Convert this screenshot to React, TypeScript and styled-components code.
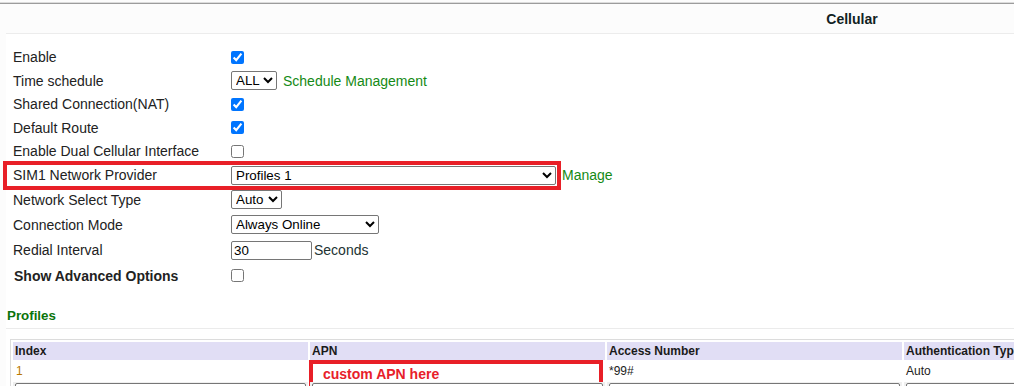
import React from 'react';
import styled, { createGlobalStyle } from 'styled-components';

const GlobalStyle = createGlobalStyle`
  html, body {
    margin: 0;
    padding: 0;
    background: #fcfcfc;
    overflow: hidden;
  }

  body {
    font-family: "Liberation Sans", Arial, sans-serif;
    font-size: 14px;
    color: #222;
  }
`;

const Page = styled.div`
  width: 1704px;
  padding-top: 3px;
`;

const TitleBar = styled.header`
  height: 29px;
  border-top: 1px solid #9c9c9c;
  box-shadow: 0 -1px 0 #dcdcdc;
  background: #fcfcfc;
  display: flex;
  align-items: center;
  justify-content: center;

  h1 {
    margin: 0;
    font-size: 14px;
    font-weight: bold;
    color: #112222;
  }
`;

const Panel = styled.main`
  margin-left: 6px;
  background: #fff;
  border-top: 1px solid #ececec;
  padding-bottom: 40px;
`;

const Form = styled.div`
  padding: 11.5px 0 0 7px;
`;

const Row = styled.div<{ $h: number }>`
  display: flex;
  align-items: center;
  height: ${p => p.$h}px;
`;

const Label = styled.div<{ $bold?: boolean }>`
  width: 218px;
  flex: none;
  font-weight: ${p => (p.$bold ? 'bold' : 'normal')};
  padding-left: ${p => (p.$bold ? '1px' : '0')};
  box-sizing: border-box;
  white-space: nowrap;
`;

const Value = styled.div`
  display: flex;
  align-items: center;
`;

const Highlight = styled.div`
  display: flex;
  align-items: center;
  height: 21px;
  margin-left: -6px;
  padding: 0 1px 0 6px;
  outline: 4px solid #e81f27;
  outline-offset: 0;
`;

const Check = styled.input.attrs({ type: 'checkbox' })`
  margin: 0;
  width: 13px;
  height: 13px;
`;

const Select = styled.select<{ $w: number }>`
  width: ${p => p.$w}px;
  height: 19px;
  margin: 0;
  font-family: "Liberation Sans", Arial, sans-serif;
  font-size: 13.333px;
  color: #000;
  background: #fff;
  border: 1px solid #767676;
  border-radius: 2px;
`;

const TextBox = styled.input<{ $w?: number }>`
  box-sizing: border-box;
  width: ${p => (p.$w ? `${p.$w}px` : 'calc(100% - 4px)')};
  height: 19px;
  margin: 0;
  padding: 1px 2px;
  font-family: "Liberation Sans", Arial, sans-serif;
  font-size: 13.333px;
  color: #000;
  border: 1px solid #767676;
  border-radius: 2px;
`;

const Link = styled.a<{ $gap: number }>`
  margin-left: ${p => p.$gap}px;
  color: #158a15;
  text-decoration: none;
  white-space: nowrap;
`;

const Unit = styled.span`
  margin-left: 2px;
  color: #223333;
`;

const SectionTitle = styled.h2`
  margin: 20px 0 0;
  padding: 0 0 4px 1px;
  border-bottom: 1px solid #ebebeb;
  font-size: 13.333px;
  line-height: 16px;
  font-weight: bold;
  color: #0a740a;
`;

const Table = styled.table`
  margin: 10px 0 0 4px;
  width: 1786px;
  table-layout: fixed;
  border: 1px solid #dcdcdc;
  border-spacing: 2px;
  font-size: 12px;

  th {
    height: 18px;
    padding: 0 2px;
    background: #e1def5;
    text-align: left;
    font-weight: bold;
    color: #1a1a1a;
    white-space: nowrap;
    overflow: hidden;
  }

  td {
    height: 18px;
    padding: 0 2px;
    color: #222;
    position: relative;
  }
`;

const EditRow = styled.tr`
  td {
    background: #efefef;
    padding: 1px 0;
  }

  input, select {
    margin-left: 2px;
  }
`;

const IndexCell = styled.td`
  && {
    color: #b97800;
    padding-left: 3px;
  }
`;

const Note = styled.div`
  position: absolute;
  left: -1px;
  top: -2px;
  width: 294px;
  height: 26px;
  box-sizing: border-box;
  border: 4px solid #e81f27;
  padding: 1px 0 0 10px;
  font-size: 14px;
  line-height: 18px;
  font-weight: bold;
  color: #e8202a;
  white-space: nowrap;
`;

const columns = ['Index', 'APN', 'Access Number', 'Authentication Type', 'Username', 'Password'];

export default function App() {
  return (
    <Page>
      <GlobalStyle />
      <TitleBar>
        <h1>Cellular</h1>
      </TitleBar>
      <Panel>
        <Form>
          <Row $h={23.5}>
            <Label>Enable</Label>
            <Value><Check defaultChecked /></Value>
          </Row>
          <Row $h={23.5}>
            <Label>Time schedule</Label>
            <Value>
              <Select $w={46} defaultValue="ALL">
                <option>ALL</option>
              </Select>
              <Link $gap={6}>Schedule Management</Link>
            </Value>
          </Row>
          <Row $h={23.5}>
            <Label>Shared Connection(NAT)</Label>
            <Value><Check defaultChecked /></Value>
          </Row>
          <Row $h={23.5}>
            <Label>Default Route</Label>
            <Value><Check defaultChecked /></Value>
          </Row>
          <Row $h={23.5}>
            <Label>Enable Dual Cellular Interface</Label>
            <Value><Check /></Value>
          </Row>
          <Row $h={24}>
            <Highlight>
              <Label>SIM1 Network Provider</Label>
              <Select $w={325} defaultValue="Profiles 1">
                <option>Profiles 1</option>
              </Select>
            </Highlight>
            <Link $gap={5}>Manage</Link>
          </Row>
          <Row $h={25.3}>
            <Label>Network Select Type</Label>
            <Value>
              <Select $w={51} defaultValue="Auto">
                <option>Auto</option>
              </Select>
            </Value>
          </Row>
          <Row $h={25.3}>
            <Label>Connection Mode</Label>
            <Value>
              <Select $w={148} defaultValue="Always Online">
                <option>Always Online</option>
              </Select>
            </Value>
          </Row>
          <Row $h={25.3}>
            <Label>Redial Interval</Label>
            <Value>
              <TextBox $w={81} defaultValue="30" />
              <Unit>Seconds</Unit>
            </Value>
          </Row>
          <Row $h={25.3}>
            <Label $bold>Show Advanced Options</Label>
            <Value><Check /></Value>
          </Row>
        </Form>

        <SectionTitle>Profiles</SectionTitle>
        <Table>
          <colgroup>
            {columns.map(c => <col key={c} style={{ width: 295 }} />)}
          </colgroup>
          <thead>
            <tr>
              {columns.map(c => <th key={c}>{c}</th>)}
            </tr>
          </thead>
          <tbody>
            <tr>
              <IndexCell>1</IndexCell>
              <td>
                <Note>custom APN here</Note>
              </td>
              <td>*99#</td>
              <td>Auto</td>
              <td></td>
              <td></td>
            </tr>
            <EditRow>
              <td><TextBox /></td>
              <td><TextBox /></td>
              <td><TextBox defaultValue="*99#" /></td>
              <td>
                <Select $w={120} defaultValue="Auto">
                  <option>Auto</option>
                </Select>
              </td>
              <td><TextBox /></td>
              <td><TextBox type="password" /></td>
            </EditRow>
          </tbody>
        </Table>
      </Panel>
    </Page>
  );
}
